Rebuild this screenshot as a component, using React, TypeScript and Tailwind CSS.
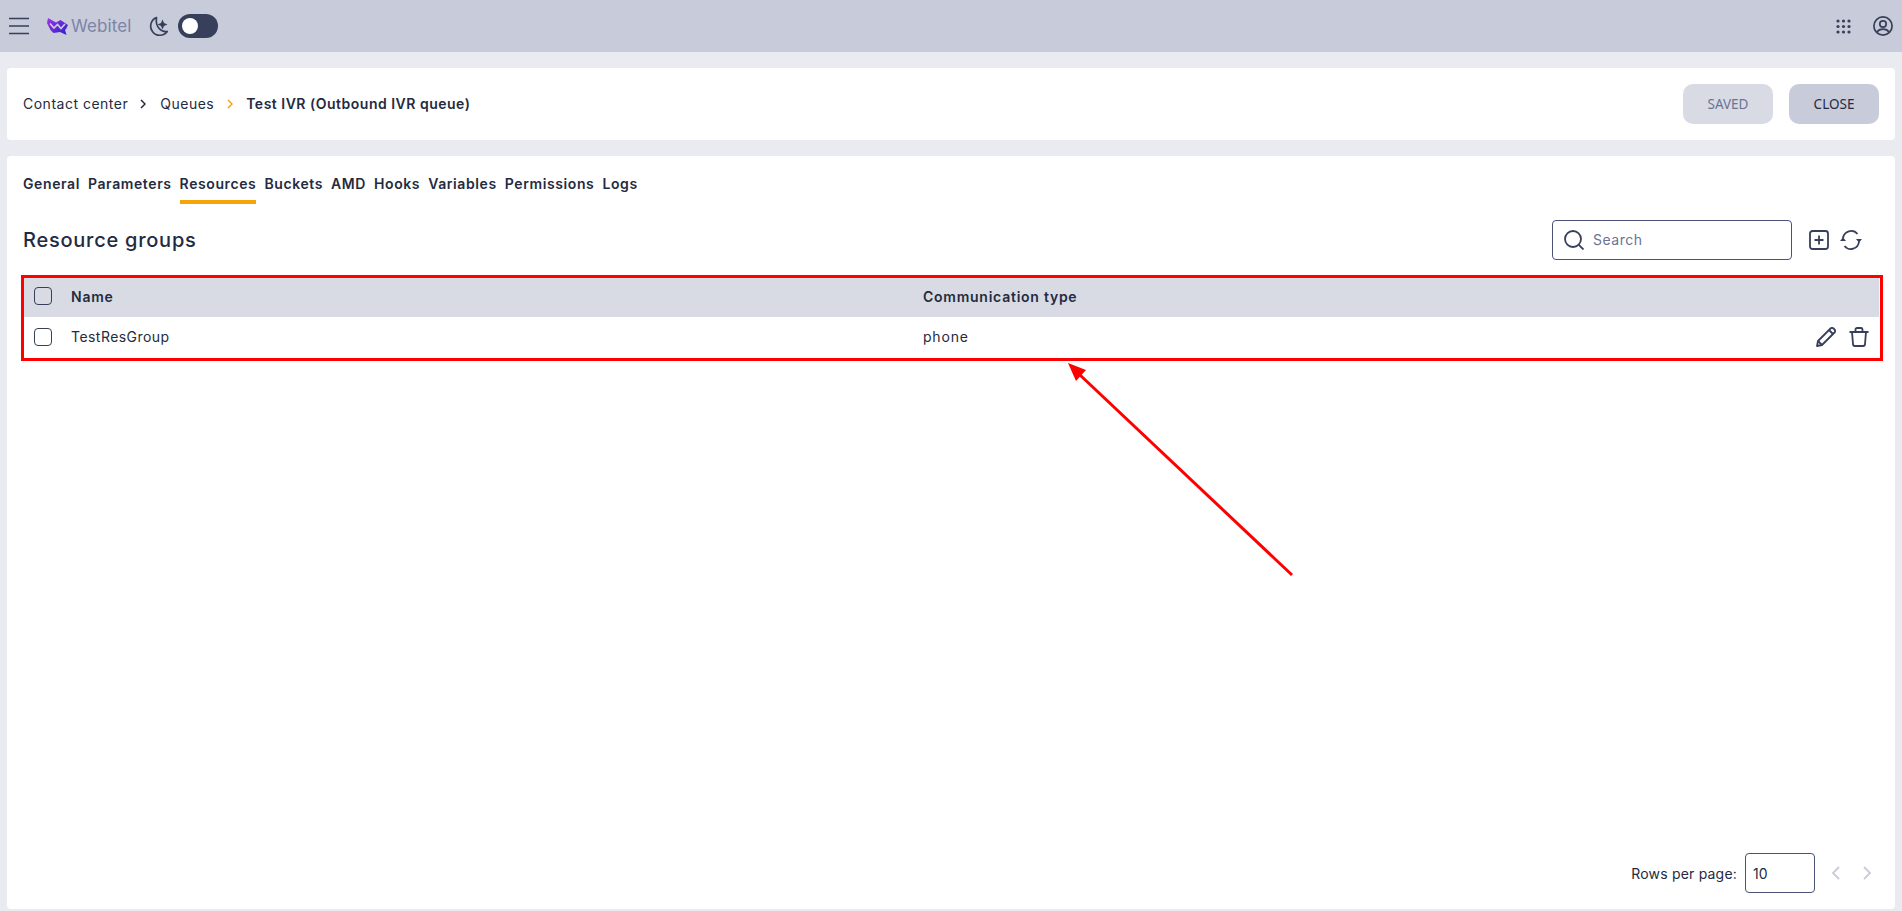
import React from "react";

const TABS = ["General", "Parameters", "Resources", "Buckets", "AMD", "Hooks", "Variables", "Permissions", "Logs"];
const INK = "#373f5b";

function Hamburger() {
  return (
    <svg width="20" height="18" viewBox="0 0 20 18" fill="none" stroke={INK} strokeWidth="1.6">
      <path d="M0 1.5h20M0 9h20M0 16.5h20" />
    </svg>
  );
}

function Logo() {
  return (
    <svg width="22" height="17" viewBox="0 0 22 17">
      <defs>
        <linearGradient id="wlogo" x1="0" y1="0" x2="1" y2="1">
          <stop offset="0" stopColor="#a233e8" />
          <stop offset="1" stopColor="#2a1fc8" />
        </linearGradient>
      </defs>
      <path d="M1 0l8 4.500L13.500 2 21 7l-2 4-1 1 1.500 5-6.500-3-6.500 1-3-3L0 5z" fill="url(#wlogo)" />
      <path d="M3 5.500l4 4.500 3.500-3.500 3.500 4 4-4.500" fill="none" stroke="#c8cbd9" strokeWidth="1.700" />
    </svg>
  );
}

function Moon() {
  return (
    <svg width="21" height="21" viewBox="0 0 21 21" fill="none" stroke={INK} strokeWidth="1.7">
      <path d="M8.500 1.500a9.200 9.200 0 1 0 10.800 14c-5.800 1.200-12.300-4.500-10.800-14z" strokeLinejoin="round" />
      <path d="M14.500 3.500l1.500 3.500 3.500 1.500-3.500 1.500-1.500 3.500-1.500-3.500-3.500-1.500 3.500-1.500z" fill={INK} stroke="none" />
    </svg>
  );
}

function AppsGrid() {
  const dots = [2, 7.5, 13];
  return (
    <svg width="15" height="15" viewBox="0 0 15 15" fill={INK}>
      {dots.map((y) => dots.map((x) => <circle key={`${x}-${y}`} cx={x} cy={y} r="1.6" />))}
    </svg>
  );
}

function UserIcon() {
  return (
    <svg width="20" height="20" viewBox="0 0 20 20" fill="none" stroke={INK} strokeWidth="1.7">
      <circle cx="10" cy="10" r="9.100" />
      <circle cx="10" cy="8" r="3.200" />
      <path d="M3.800 16.200c1.500-2.200 3.600-3 6.200-3s4.700.8 6.200 3" />
    </svg>
  );
}

function SearchIcon() {
  return (
    <svg width="20" height="20" viewBox="0 0 20 20" fill="none" stroke={INK} strokeWidth="1.8">
      <circle cx="9" cy="9" r="8" />
      <path d="M14.800 14.800l4.700 4.700" />
    </svg>
  );
}

function PlusBox() {
  return (
    <svg width="20" height="20" viewBox="0 0 20 20" fill="none" stroke={INK} strokeWidth="1.800">
      <rect x="1" y="1" width="18" height="18" rx="2.500" />
      <path d="M10 5.500v9M5.500 10h9" />
    </svg>
  );
}

function RefreshIcon() {
  return (
    <svg width="22" height="20" viewBox="0 0 22 20" fill="none" stroke={INK} strokeWidth="1.800">
      <path d="M3 8.500A8.200 8.200 0 0 1 17.500 4" />
      <path d="M19 11.500A8.200 8.200 0 0 1 4.500 16" />
      <path d="M0 11l3-3.800 3 3.800z" fill={INK} stroke="none" />
      <path d="M16 9l3 3.800 3-3.800z" fill={INK} stroke="none" />
    </svg>
  );
}

function PencilIcon() {
  return (
    <svg width="20" height="20" viewBox="0 0 20 20" fill="none" stroke={INK} strokeWidth="1.800" strokeLinejoin="round">
      <path d="M1 19l1-5L14.500 1.500a2.100 2.100 0 0 1 3 0l1 1a2.100 2.100 0 0 1 0 3L6 18z" />
      <path d="M2 14l4 4M13 3l4 4" />
    </svg>
  );
}

function TrashIcon() {
  return (
    <svg width="20" height="20" viewBox="0 0 20 20" fill="none" stroke={INK} strokeWidth="1.800" strokeLinejoin="round">
      <path d="M0.500 5h19M6.500 5V2.500a1.500 1.500 0 0 1 1.500-1.500h4a1.500 1.500 0 0 1 1.500 1.500V5" />
      <path d="M3 5l1 12a2 2 0 0 0 2 2h8a2 2 0 0 0 2-2l1-12" />
    </svg>
  );
}

function Crumb({ color }: { color: string }) {
  return (
    <svg width="6" height="10" viewBox="0 0 6 10" fill="none" stroke={color} strokeWidth="1.500">
      <path d="M1 1l4 4-4 4" />
    </svg>
  );
}

function Checkbox() {
  return <div className="w-[18px] h-[18px] rounded-[4px] border border-[#373f5b] bg-transparent" />;
}

export default function App() {
  return (
    <div className="relative h-[911px] overflow-hidden flex flex-col bg-[#eaebf1] font-['Inter',sans-serif] text-[14px] text-[#242b40]">
      {/* Top bar */}
      <header className="h-[52px] shrink-0 bg-[#c8cbd9] flex items-center pl-[9px] pr-[9px]">
        <Hamburger />
        <div className="ml-[18px] flex items-center">
          <Logo />
          <span className="ml-[2px] text-[17px] leading-none tracking-[0.1px] text-[#7d84a8]">Webitel</span>
        </div>
        <div className="ml-[17px]"><Moon /></div>
        <div className="ml-[9px] w-[40px] h-[24px] rounded-full bg-[#373f5b] flex items-center pl-[4px]">
          <div className="w-[16px] h-[16px] rounded-full bg-white" />
        </div>
        <div className="ml-auto flex items-center gap-[22px]">
          <AppsGrid />
          <UserIcon />
        </div>
      </header>

      <main className="flex-1 flex flex-col gap-4 pt-4 px-[7px] pb-[2px] min-h-0">
        {/* Breadcrumbs and actions */}
        <section className="h-[72px] shrink-0 bg-white rounded-[4px] flex items-center px-4">
          <div className="flex items-center tracking-[0.5px] -mt-[1px]">
            <span>Contact center</span>
            <span className="ml-[12px] mr-[14px]"><Crumb color="#242b40" /></span>
            <span>Queues</span>
            <span className="ml-[13px] mr-[13px]"><Crumb color="#f5a50a" /></span>
            <span className="font-semibold">Test IVR (Outbound IVR queue)</span>
          </div>
          <div className="ml-auto flex gap-4 font-['Noto_Sans',sans-serif]">
            <button className="w-[90px] h-[40px] rounded-[10px] bg-[#d8dbe4] text-[#6b7394] text-[13.500px]">SAVED</button>
            <button className="w-[90px] h-[40px] rounded-[10px] bg-[#c8cbd9] text-[#242b40] text-[13.500px]">CLOSE</button>
          </div>
        </section>

        {/* Resources tab */}
        <section className="flex-1 bg-white rounded-[4px] flex flex-col px-4 pt-4 pb-4 min-h-0">
          <nav className="flex gap-[8px] h-[32px] font-semibold tracking-[0.6px]">
            {TABS.map((tab) => (
              <div
                key={tab}
                className={`h-[32px] pt-[1px] border-b-4 ${tab === "Resources" ? "border-[#f5a50a]" : "border-transparent"}`}
              >
                {tab}
              </div>
            ))}
          </nav>

          <div className="mt-4 h-[40px] flex items-center">
            <h2 className="text-[20px] font-medium tracking-[0.75px]">Resource groups</h2>
            <div className="ml-auto w-[240px] h-[40px] rounded-[4px] border border-[#4a5275] flex items-center pl-[11px]">
              <SearchIcon />
              <span className="ml-[9px] -mt-[1px] text-[#6b7394] tracking-[0.5px]">Search</span>
            </div>
            <div className="ml-[17px] mr-[17px] flex items-center gap-[11px]">
              <PlusBox />
              <RefreshIcon />
            </div>
          </div>

          {/* Table */}
          <div className="mt-[18px] text-[14px]">
            <div className="h-[39px] bg-[#d8dbe4] flex items-center pl-[11px] pb-[3px] font-semibold">
              <Checkbox />
              <span className="ml-[19px] w-[852px] tracking-[0.75px]">Name</span>
              <span className="tracking-[0.75px]">Communication type</span>
            </div>
            <div className="h-[40px] flex items-center pl-[11px] pr-[10px]">
              <Checkbox />
              <span className="ml-[19px] w-[852px] -mt-[1px] tracking-[0.45px]">TestResGroup</span>
              <span className="-mt-[1px] tracking-[0.8px]">phone</span>
              <div className="ml-auto flex items-center gap-[13px]">
                <PencilIcon />
                <TrashIcon />
              </div>
            </div>
          </div>

          {/* Pagination */}
          <div className="mt-auto flex items-center justify-end pr-[7px]">
            <span className="tracking-[0.2px]">Rows per page:</span>
            <div className="ml-[8px] w-[70px] h-[40px] rounded-[4px] border border-[#4a5275] flex items-center pl-[7px]">10</div>
            <div className="ml-[16px] flex items-center gap-[23px]">
              <svg width="9" height="14" viewBox="0 0 9 14" fill="none" stroke="#c8cbd9" strokeWidth="1.800"><path d="M8 1L2 7l6 6" /></svg>
              <svg width="9" height="14" viewBox="0 0 9 14" fill="none" stroke="#c8cbd9" strokeWidth="1.800"><path d="M1 1l6 6-6 6" /></svg>
            </div>
          </div>
        </section>
      </main>

      {/* Annotation drawn over the screenshot */}
      <div className="absolute left-[21px] top-[275px] w-[1862px] h-[86px] border-[3px] border-[#ff0000] pointer-events-none" />
      <svg className="absolute left-0 top-0 pointer-events-none" width="1902" height="911" fill="none">
        <path d="M1292 575L1080 375" stroke="#ff0000" strokeWidth="3" />
        <path d="M1068 363l18 7-10 11z" fill="#ff0000" />
      </svg>
    </div>
  );
}
